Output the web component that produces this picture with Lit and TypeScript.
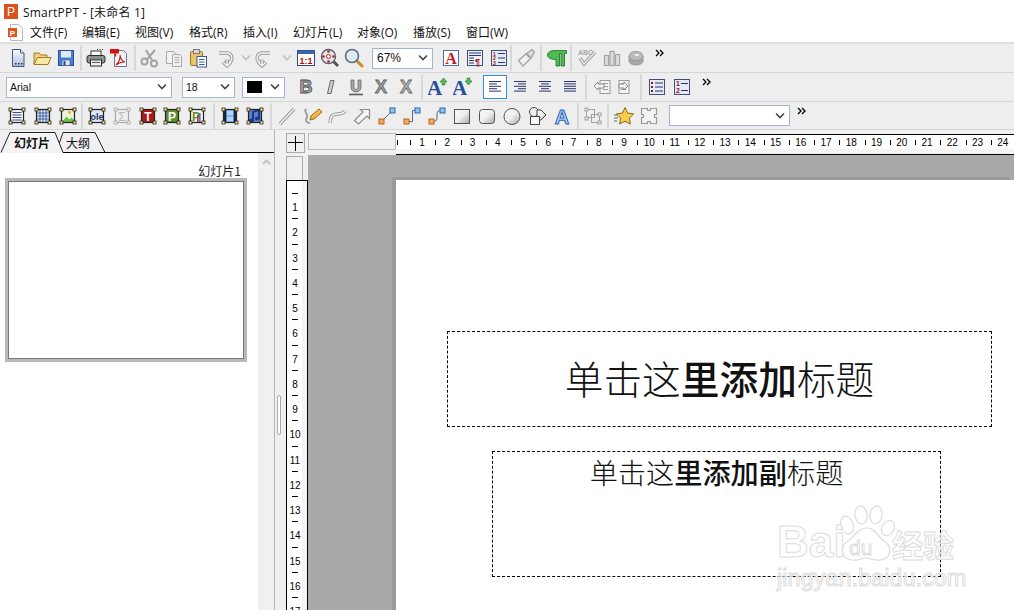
import { LitElement, html, css, svg } from "lit";
import { customElement } from "lit/decorators.js";

const frame = (inner: any, c = "#222", hf = "#ffe680") => svg`${inner}
  <rect x="3.5" y="3.5" width="13" height="13" fill="none" stroke="${c}" stroke-width="1.2"/>
  ${[[2, 2], [15, 2], [2, 15], [15, 15]].map(([x, y]) => svg`<rect x="${x}" y="${y}" width="3" height="3" fill="${hf}" stroke="${c}" stroke-width=".8"/>`)}`;
const lines = (ys: number[], x0: number, x1: number, c: string, w = 1) =>
  ys.map((y) => svg`<line x1="${x0}" y1="${y}" x2="${x1}" y2="${y}" stroke="${c}" stroke-width="${w}"/>`);
const alignIcon = (rows: [number, number][]) =>
  rows.map(([a, b], i) => svg`<line x1="${a}" x2="${b}" y1="${4.5 + i * 2.4}" y2="${4.5 + i * 2.4}" stroke="#27346e" stroke-width="1"/>`);
const hollow = (d: string, w = 3.4) => svg`<path d="${d}" fill="none" stroke="#9a9a9a" stroke-width="${w}" stroke-linejoin="round"/><path d="${d}" fill="none" stroke="#f4f4f4" stroke-width="${w - 2}" stroke-linejoin="round"/>`;
const letter = (t: string, fill: string, stroke: string, extra: any = "") => svg`<text x="10" y="16" text-anchor="middle" font-family="Liberation Sans, sans-serif" font-weight="700" font-size="18" fill="${fill}" stroke="${stroke}" stroke-width=".8">${t}</text>${extra}`;
const conn = (d: string) => svg`<path d="${d}" fill="none" stroke="#4a6a90" stroke-width="1"/><rect x="2" y="13" width="5" height="5" fill="#f5a860" stroke="#b5651d"/><rect x="13" y="2" width="5" height="5" fill="#8cc4f0" stroke="#2c6aa8"/>`;
const aSize = (up: boolean) => svg`<text x="-1" y="18" font-family="Liberation Serif, serif" font-weight="700" font-size="21" fill="#2a4c9c">A</text>
  <path d="${up ? "M15.5 1l3.5 4h-2v3h-3V5h-2z" : "M14 1h3v3h2l-3.5 4L12 4h2z"}" fill="#5cb85c" stroke="#2d7a2d" stroke-width=".6"/>`;
const boxList = (num: boolean) => svg`<rect x="2.5" y="2.5" width="15" height="15" fill="#e4ebf7" stroke="#444e70"/>
  ${num ? svg`<text x="4" y="9" font-size="7" font-weight="700" font-family="Liberation Sans, sans-serif" fill="#a01010">1</text><text x="4" y="16" font-size="7" font-weight="700" font-family="Liberation Sans, sans-serif" fill="#a01010">2</text>${lines([6.5, 13.5], 9, 16, "#27346e")}`
    : svg`<rect x="4" y="5" width="2" height="2" fill="#a01010"/><rect x="4" y="9" width="2" height="2" fill="#a01010"/><rect x="4" y="13" width="2" height="2" fill="#a01010"/>${lines([6, 10, 14], 8, 16, "#27346e")}`}`;
const indent = (flip: boolean) => svg`<g transform="${flip ? "translate(20,0) scale(-1,1)" : ""}"><rect x="8" y="3.5" width="10" height="13" fill="#f4f4f4" stroke="#9a9a9a"/>${lines([6.5, 9.5, 12.5], 11, 16, "#9a9a9a")}</g>
  <path d="${flip ? "M6 3l4 4-4 4V9H1V5h5z" : "M6 3L2 7l4 4V9h6V5H6z"}" transform="translate(${flip ? 1 : 0},2)" fill="#f4f4f4" stroke="#8a8a8a"/>`;

const icons: Record<string, any> = {
  new: svg`<path d="M4.5 1.5h8l3.5 3.5v13.5H4.5z" fill="url(#gPage)" stroke="#46557a"/><path d="M12.5 1.5V5H16" fill="#fff" stroke="#46557a"/><rect x="7" y="15" width="1.5" height="1.5" fill="#333"/><rect x="10" y="15" width="1.5" height="1.5" fill="#333"/><rect x="13" y="15" width="1.5" height="1.5" fill="#333"/>`,
  open: svg`<path d="M2 16V5h5l2 2h6v3" fill="#f0cf80" stroke="#a47c20"/><path d="M2 16.5L5.5 9.5H19l-3 7z" fill="#fbe6a6" stroke="#a47c20"/>`,
  save: svg`<rect x="2.5" y="2.5" width="15" height="15" fill="#4a80d4" stroke="#2b4c9b"/><rect x="5" y="3" width="10" height="6.5" fill="#dfe9f8"/><rect x="6" y="12" width="8" height="5.5" fill="#e6e6e6" stroke="#2b4c9b" stroke-width=".6"/><rect x="7.5" y="13" width="2" height="4" fill="#2b4c9b"/>`,
  print: svg`<rect x="5" y="3" width="10" height="5" fill="#fff" stroke="#333"/><rect x="1" y="7.5" width="18" height="7.5" rx="2" fill="#8c9194" stroke="#2d2d2d"/><rect x="4.5" y="12" width="11" height="6" fill="#f3f3f3" stroke="#2d2d2d"/><line x1="6" x2="14" y1="14.5" y2="14.5" stroke="#555"/><rect x="16" y="9.5" width="1.5" height="1.5" fill="#4ecb4e"/><path d="M11 1h1v1h-1zM13.5 1h1v1h-1zM16 1h1v1h-1z" fill="#555"/>`,
  pdf: svg`<path d="M5.5 2.5h9l3 3v13h-12z" fill="#f4f6fa" stroke="#66769a"/><rect x="1" y="1" width="9" height="4.5" fill="#d81010"/><rect x="6" y="5.5" width="1.2" height="3" fill="#d81010"/><path d="M7 17C10 14 11.5 10 11 7c.5 4 2 6 5 7-3-.3-6 .6-9 3z" fill="none" stroke="#d81010" stroke-width="1.1"/>`,
  cut: svg`<g fill="none" stroke="#a4a4a4" stroke-width="2"><circle cx="4.5" cy="13.5" r="3"/><circle cx="14" cy="15.5" r="3"/><path d="M7 11.5L15 2M12.5 13L6 2"/></g>`,
  copy: svg`<g fill="#f2f2f2" stroke="#a8a8a8"><path d="M2.5 3.5h7l2 2v10h-9z"/><path d="M8.5 6.5h7l2 2v10h-9z"/></g>${lines([9.5, 12, 14.5], 10.5, 15.5, "#a8a8a8")}`,
  paste: svg`<rect x="2.5" y="3.5" width="12" height="14" rx="1" fill="#edc368" stroke="#9c7620"/><rect x="5.5" y="1.5" width="6" height="4" fill="#d8d8d8" stroke="#777"/><rect x="9" y="8.5" width="9.5" height="10.5" fill="#fff" stroke="#3a5a9a"/>${lines([11.5, 14, 16.5], 11, 16.5, "#3a5a9a")}`,
  undo: hollow("M3 5h8a5 5 0 0 1 2 9.5M11 11.5V18M7 14l4 4 4-4"),
  redo: hollow("M17 5H9a5 5 0 0 0-2 9.5M9 11.5V18M5 14l4 4 4-4"),
  one: svg`<rect x="1.5" y="2.5" width="17" height="15" fill="#fff" stroke="#2f4a7a"/><rect x="1.5" y="2.5" width="17" height="3.5" fill="#3c66a8"/><text x="10" y="15.5" text-anchor="middle" font-family="Liberation Sans, sans-serif" font-size="9" font-weight="700" fill="#b00c0c">1:1</text>`,
  zfit: svg`<line x1="13" y1="13" x2="18" y2="18" stroke="#555" stroke-width="3"/><circle cx="8.5" cy="8.5" r="7" fill="#e4e4e8" stroke="#5a6475" stroke-width="1.4"/><circle cx="8.5" cy="8.5" r="2" fill="#fff" stroke="#b03030"/>${[[8.5, 3.5], [8.5, 13.5], [3.5, 8.5], [13.5, 8.5]].map(([x, y]) => svg`<circle cx="${x}" cy="${y}" r="1.3" fill="#c02020"/>`)}`,
  find: svg`<line x1="12.5" y1="12.5" x2="18" y2="18" stroke="#c8901e" stroke-width="3" stroke-linecap="round"/><circle cx="8" cy="8" r="6.5" fill="#dcebf8" stroke="#5a6a7a" stroke-width="1.5"/>`,
  abox: svg`<rect x="2.5" y="2.5" width="15" height="15" fill="#fff" stroke="#5570a0"/><text x="10" y="16" text-anchor="middle" font-family="Liberation Serif, serif" font-size="16" font-weight="700" fill="#c01818">A</text>`,
  para: svg`<rect x="2.5" y="2.5" width="15" height="15" fill="#eef2fa" stroke="#3f4f77"/>${lines([5, 7.5], 4, 16, "#27346e")}${lines([10, 12.5, 15], 4, 9, "#27346e")}<text x="10" y="16.5" font-family="Liberation Sans, sans-serif" font-size="9" font-weight="700" fill="#b01010">¶</text>`,
  list: svg`<rect x="2.5" y="2.5" width="15" height="15" fill="#e4ebf7" stroke="#3f4f77"/><g font-family="Liberation Sans, sans-serif" font-size="5" font-weight="700" fill="#a01010"><text x="4" y="7.5">1</text><text x="4" y="12">2</text><text x="4" y="16.5">3</text></g>${lines([5.5, 10, 14.5], 9, 16, "#27346e")}`,
  brush: svg`<path d="M2.5 12.5L10 6l4.5 4.5L7 18z" fill="#f2f2f2" stroke="#a4a4a4" stroke-width="1.3"/><path d="M10.5 5.5L16 1.5l2.5 2.5-3.5 6z" fill="#dcdcdc" stroke="#a4a4a4" stroke-width="1.3"/>`,
  pil: svg`<path d="M7 2.5H19.5V5.5H17.5V18H14V5.5H12.5V18H9V11.5C3.5 11.5.5 9.5.5 7 .5 4.5 3.5 2.5 7 2.5z" fill="#4fb952" stroke="#1b6e22" stroke-width=".8"/>`,
  check: svg`<g font-family="Liberation Sans, sans-serif" font-size="7" font-weight="700" fill="#a8a8a8"><text x="1" y="7">ABC</text></g><path d="M3 10l4 6L18 4" fill="none" stroke="#a4a4a4" stroke-width="3.4"/><path d="M3 10l4 6L18 4" fill="none" stroke="#f0f0f0" stroke-width="1.2"/>`,
  bars: svg`<g fill="#dedede" stroke="#a4a4a4" stroke-width="1.2"><rect x="2.5" y="7.5" width="4" height="10"/><rect x="8" y="3.5" width="4" height="14"/><rect x="13.5" y="6.5" width="4" height="11"/></g>`,
  disc: svg`<path d="M3 8v5c0 2 3 4 7 4s7-2 7-4V8" fill="#a8a8a8" stroke="#9a9a9a"/><ellipse cx="10" cy="8" rx="7" ry="4.5" fill="#bcbcbc" stroke="#9a9a9a"/><ellipse cx="11" cy="7" rx="2.5" ry="1" fill="#efefef"/>`,
  B: letter("B", "#a6a6a6", "#4c4c4c"),
  I: svg`<path d="M9.5 3.5h3.5L10 16.5H6.5z" fill="#cfcfcf" stroke="#6a6a6a"/>`,
  U: svg`<path d="M5 3v7.5a5 4.5 0 0 0 10 0V3h-3v7.5a2 2 0 0 1-4 0V3z" fill="#a8a8a8" stroke="#5a5a5a" stroke-width=".7"/><line x1="3" y1="17.5" x2="17" y2="17.5" stroke="#5a5a5a" stroke-width="1.6"/>`,
  X1: letter("X", "#9c9c9c", "#666"),
  X2: letter("X", "#b4b4b4", "#6a6a6a"),
  aup: aSize(true),
  adn: aSize(false),
  al: alignIcon([[4, 16], [4, 12], [4, 16], [4, 12], [4, 16]]),
  ar: alignIcon([[4, 16], [8, 16], [4, 16], [8, 16], [4, 16]]),
  ac: alignIcon([[4, 16], [6, 14], [4, 16], [6, 14], [4, 16]]),
  aj: alignIcon([[4, 16], [4, 16], [4, 16], [4, 16], [4, 16]]),
  in1: indent(false),
  in2: indent(true),
  bul: boxList(false),
  num: boxList(true),
  ft: frame(svg`<rect x="3.5" y="3.5" width="13" height="13" fill="#f5f8fe"/>${lines([6.5, 9, 11.5, 14], 5.5, 14.5, "#3c4d82")}`),
  fg: frame(svg`<rect x="3.5" y="3.5" width="13" height="13" fill="#e4ebf7"/>${lines([7, 10, 13], 3.5, 16.5, "#3c5d9a")}<path d="M7 3.5v13M10 3.5v13M13 3.5v13" stroke="#3c5d9a" fill="none"/>`),
  fp: frame(svg`<rect x="3.5" y="3.5" width="13" height="13" fill="#e7f3dc"/><path d="M3.5 16.5l5-6 3 3 2-2 3 3v2z" fill="#6fbf4a"/><circle cx="11.5" cy="6.5" r="1.7" fill="#f0b840"/>`),
  fo: frame(svg`<rect x="3.5" y="3.5" width="13" height="13" fill="#dfe8f8"/><text x="10" y="13.5" text-anchor="middle" font-family="Liberation Sans, sans-serif" font-size="9" font-weight="700" fill="#1e2f6a">ole</text>`),
  fs: frame(svg`<text x="10" y="14.5" text-anchor="middle" font-family="Liberation Sans, sans-serif" font-size="12" fill="#b8b8b8">Σ</text>`, "#a8a8a8", "#ececec"),
  fT: frame(svg`<rect x="3.5" y="3.5" width="13" height="13" fill="#b01818"/><text x="10" y="14.5" text-anchor="middle" font-family="Liberation Sans, sans-serif" font-size="12" font-weight="700" fill="#fff">T</text>`),
  fP: frame(svg`<rect x="3.5" y="3.5" width="13" height="13" fill="#5e9030"/><text x="10" y="14.5" text-anchor="middle" font-family="Liberation Sans, sans-serif" font-size="12" font-weight="700" fill="#fff">P</text>`),
  fQ: frame(svg`<rect x="3.5" y="3.5" width="13" height="13" fill="#f4f8ee"/><text x="9" y="14.5" text-anchor="middle" font-family="Liberation Sans, sans-serif" font-size="12" font-weight="700" fill="#5e9030">P</text><rect x="10" y="9" width="1.6" height="7" fill="#d03030"/><rect x="12" y="7" width="1.6" height="9" fill="#4a70d0"/>`),
  ff: frame(svg`<rect x="3.5" y="3" width="13" height="14" fill="#4f86d8"/><rect x="3" y="3" width="3" height="14" fill="#15233f"/><rect x="14" y="3" width="3" height="14" fill="#15233f"/><rect x="7" y="4.5" width="6" height="5" fill="#b8d4f4"/><rect x="7" y="10.5" width="6" height="5" fill="#b8d4f4"/>`),
  fm: frame(svg`<rect x="3.5" y="3.5" width="13" height="13" fill="#5a86d0"/><path d="M8 14V6l6-2v8" fill="none" stroke="#1f3a80" stroke-width="2"/><ellipse cx="6.5" cy="14.5" rx="2.6" ry="2" fill="#1f3a80"/><ellipse cx="12.5" cy="12.5" rx="2.6" ry="2" fill="#1f3a80"/>`),
  line: hollow("M3 18L17 3"),
  pen: svg`<path d="M4 3c-3 3 3 5 1 8s-1 6 3 6" fill="none" stroke="#999" stroke-width="1.8"/><path d="M8 14l1-4 8-7 3 3-8 7z" fill="#f4b942" stroke="#8f6a18"/>`,
  curve: hollow("M3 17c0-9 5-9 7-9s6 0 8-3"),
  arrow: svg`<path d="M2.5 15.5L11 7 8.5 4.5H17.5V13.5L15 11 6.5 19z" transform="translate(0,-1)" fill="#f4f4f4" stroke="#8c8c8c" stroke-width="1.2"/>`,
  c1: conn("M5 15L15 5"),
  c2: conn("M7 15.5h3.5V4.5H13"),
  c3: conn("M7 15.5c6 0 0-11 6-11"),
  rect: svg`<rect x="2.5" y="3.5" width="15" height="14" fill="url(#gShape)" stroke="#555"/>`,
  rrect: svg`<rect x="2.5" y="3.5" width="15" height="14" rx="3" fill="url(#gShape)" stroke="#555"/>`,
  oval: svg`<circle cx="10" cy="10.5" r="8" fill="url(#gShape)" stroke="#555"/>`,
  shapes: svg`<circle cx="7" cy="6" r="4.5" fill="#f0f0f0" stroke="#444"/><path d="M10 4h4l5 5-5 5h-4z" fill="url(#gShape)" stroke="#444"/><rect x="3.5" y="10.5" width="9" height="8" fill="#f8f8f8" stroke="#444"/>`,
  wa: svg`<text x="10" y="17.5" text-anchor="middle" font-family="Liberation Sans, sans-serif" font-weight="700" font-size="20" fill="#b8d6f6" stroke="#2f66b8" stroke-width="1">A</text>`,
  grp: svg`<g fill="#ececec" stroke="#a0a0a0"><rect x="3.5" y="3.5" width="8" height="8" fill="none"/><rect x="8.5" y="8.5" width="8" height="8" fill="none"/><rect x="2" y="2" width="3" height="3"/><rect x="15" y="15" width="3" height="3"/><rect x="15" y="7" width="3" height="3"/><rect x="2" y="11" width="3" height="3"/></g>`,
  star: svg`<path d="M11 1.5l2.7 5.6 6 .8-4.4 4.2 1.1 6L11 15.2 5.6 18l1-6L2.4 8l6-.9z" fill="#f8cd4c" stroke="#8a6a1a"/><path d="M0 9h3M0 12h4M0 15h3" stroke="#666" fill="none"/>`,
  gfr: svg`<path d="M2.5 2.5h6v2h3v-2h6v6h-2v3h2v6h-6v-2h-3v2h-6v-6h2v-3h-2z" fill="#f4f4f4" stroke="#9a9a9a" stroke-width="1.2"/>`,
};

type Item = { k: "i"; n: string; c: number } | { k: "s"; c: number } | { k: "v"; c: number } | { k: "m"; c: number } | { k: "c"; a: number; b: number; t: string } | { k: "sel"; n: string; c: number };
const i = (n: string, c: number): Item => ({ k: "i", n, c });
const s = (c: number): Item => ({ k: "s", c });
const v = (c: number): Item => ({ k: "v", c });
const m = (c: number): Item => ({ k: "m", c });
const cb = (a: number, b: number, t: string): Item => ({ k: "c", a, b, t });

const rows: Item[][] = [
  [i("new", 18), i("open", 42), i("save", 66), s(81), i("print", 96), i("pdf", 119), s(134.5), i("cut", 150), i("copy", 174), i("paste", 198), i("undo", 226), v(246), i("redo", 263), v(287), i("one", 306), i("zfit", 330), i("find", 354), cb(372, 433, "67%"), i("abox", 451), i("para", 475), i("list", 499), s(511), i("brush", 526), s(541), i("pil", 557), s(571), i("check", 587), i("bars", 612), i("disc", 636), m(660)],
  [cb(6, 172, "Arial"), cb(182, 235, "18"), cb(242, 285, "■"), i("B", 306), i("I", 331), i("U", 356), i("X1", 381), i("X2", 406), s(422), i("aup", 438), i("adn", 463), { k: "sel", n: "al", c: 495 }, i("ar", 520), i("ac", 545), i("aj", 570), s(586), i("in1", 602), i("in2", 627), s(641), i("bul", 657), i("num", 682), m(707)],
  [i("ft", 17), i("fg", 43), i("fp", 68), s(82), i("fo", 97), i("fs", 122), i("fT", 148), i("fP", 172), i("fQ", 197), s(214), i("ff", 230), i("fm", 255), s(271), i("line", 287), i("pen", 312), i("curve", 337), i("arrow", 362), i("c1", 387), i("c2", 412), i("c3", 437), i("rect", 462), i("rrect", 487), i("oval", 512), i("shapes", 537), i("wa", 562), s(578), i("grp", 593), s(608), i("star", 624), i("gfr", 649), cb(669, 790, ""), m(802)],
];

const menus: [string, number][] = [["文件(F)", 38], ["编辑(E)", 39], ["视图(V)", 40], ["格式(R)", 40], ["插入(I)", 36], ["幻灯片(L)", 50], ["对象(O)", 42], ["播放(S)", 39], ["窗口(W)", 44]];
const menuX = [30, 82, 135, 189, 243, 293, 357, 413, 466];

const widthOf = (it: Item) => (it.k === "c" ? it.b - it.a : it.k === "s" ? 2 : it.k === "v" ? 10 : it.k === "m" ? 10 : it.k === "sel" ? 24 : 20);
const leftOf = (it: Item) => (it.k === "c" ? it.a : it.c - widthOf(it) / 2);

@customElement("app-root")
export class AppRoot extends LitElement {
  static styles = css`
    :host { display: block; width: 1014px; height: 610px; overflow: hidden; position: relative; background: #f0f0f0; font-family: "Open Sans", "Noto Sans CJK SC", sans-serif; color: #111; }
    svg { display: block; flex: none; }
    .defs { width: 0; height: 0; position: absolute; }
    .title { height: 22px; background: #fff; display: flex; align-items: center; gap: 5px; padding: 1px 0 0 4px; box-sizing: border-box; font-size: 12px; }
    .title span { letter-spacing: .2px; }
    .menu { height: 20px; background: #fff; display: flex; align-items: center; padding-left: 8px; font-size: 12px; box-sizing: border-box; }
    .menu span { white-space: nowrap; display: block; }
    .bar { box-sizing: border-box; display: flex; align-items: center; background: #eee; border-bottom: 1px solid #d6d6d6; height: 29px; }
    .bar.r0 { height: 31px; border-top: 2px solid #dedede; }
    .bar.r2 { height: 28px; }
    .sep { width: 2px; height: 26px; background: #d8d8d8; flex: none; }
    .sel { width: 24px; height: 24px; box-sizing: border-box; border: 1px solid #3d8ad6; background: #fff; display: flex; align-items: center; justify-content: center; flex: none; }
    .more { flex: none; width: 10px; transform: translateY(-5px); }
    .combo { flex: 1; box-sizing: border-box; height: 21px; background: #fff; border: 1px solid #a4b5cf; display: flex; align-items: center; justify-content: space-between; padding: 0 4px 0 3px; font-size: 10.5px; font-family: "Liberation Sans", sans-serif; }
    .combo.big { font-size: 12px; padding-left: 4px; }
    .swatch { width: 15px; height: 12px; background: #000; margin-left: 1px; }
    .main { display: flex; height: 480px; box-sizing: border-box; }
    .left { width: 275px; flex: none; box-sizing: border-box; border-right: 1px solid #b4b4b4; display: flex; flex-direction: column; }
    .tabs { height: 23px; flex: none; background: #f0f0f0; }
    .tabs svg { width: 274px; height: 23px; }
    .tabs text { font-family: "Noto Sans CJK SC", sans-serif; font-size: 12px; fill: #111; }
    .tabs text.on { font-weight: 700; }
    .slides { flex: 1; display: flex; min-height: 0; }
    .list { width: 258px; background: #fff; box-sizing: border-box; padding: 10px 0 0 5px; }
    .cap { font-size: 12px; line-height: 15px; height: 15px; text-align: right; width: 236px; font-family: "Noto Sans CJK SC", sans-serif; color: #222; }
    .thumb { width: 242px; height: 184px; box-sizing: border-box; border: 3px solid #b9b9b9; background: #fff; }
    .thumb div { height: 100%; box-sizing: border-box; border: 1px solid #777; }
    .sb { flex: 1; background: #f0f0f0; display: flex; justify-content: center; padding-top: 6px; }
    .split { width: 11px; flex: none; display: flex; align-items: center; padding-top: 90px; box-sizing: border-box; padding-left: 2px; }
    .grip { width: 2px; height: 38px; border: 1px solid #aaa; border-radius: 3px; background: #fff; }
    .work { flex: 1; display: grid; grid-template-columns: 22px 1fr; grid-template-rows: 25px 1fr; min-width: 0; }
    .corner { margin-top: 3px; width: 19px; height: 20px; box-sizing: border-box; border: 1px solid #aaa; display: flex; align-items: center; justify-content: center; }
    .hr { display: flex; align-items: flex-start; overflow: hidden; }
    .hbox { width: 88px; height: 17px; box-sizing: border-box; border: 1px solid #bbb; flex: none; margin-top: 3px; }
    .hruler { flex: 1; height: 21px; margin-top: 4px; box-sizing: border-box; border-top: 1px solid #000; border-bottom: 1px solid #000; display: flex; background: linear-gradient(#fff 14px, #f4f4f4 14px); overflow: hidden; }
    .hlead { width: 14px; flex: none; }
    .hlead i { display: block; width: 1px; height: 5px; background: #000; margin: 5px 0 0 1px; }
    .hcell { width: 25.26px; flex: none; display: flex; align-items: flex-start; font: 10px "Liberation Sans", sans-serif; line-height: 13px; padding: 1px 2px 0 0; box-sizing: border-box; color: #000; }
    .hcell i { width: 1px; height: 5px; background: #000; margin-top: 4px; flex: none; }
    .hcell b { font-weight: 400; flex: 1; text-align: center; }
    .vcol { display: flex; flex-direction: column; width: 22px; overflow: hidden; margin-top: 1px; }
    .vbox { width: 17px; height: 24px; flex: none; box-sizing: border-box; border: 1px solid #aaa; border-bottom: none; background: #f0f0f0; }
    .vruler { flex: 1; box-sizing: border-box; border-left: 1px solid #000; border-right: 1px solid #000; border-top: 1px solid #000; width: 22px; background: linear-gradient(90deg, #fff 15px, #f4f4f4 15px); padding-top: 12px; }
    .vcell { height: 25.27px; display: flex; flex-direction: column; align-items: center; font: 10px "Liberation Sans", sans-serif; width: 16px; color: #000; }
    .vcell i { width: 6px; height: 1px; background: #000; flex: none; }
    .vcell b { font-weight: 400; line-height: 13px; margin-top: 7px; }
    .canvas { background: #a9a9a9; overflow: hidden; min-height: 0; padding: 25px 0 0 88px; box-sizing: border-box; }
    .page { background: #fff; height: 500px; box-shadow: -4px -3px 0 #999; display: flex; flex-direction: column; padding-top: 151px; box-sizing: border-box; font-family: "Noto Sans CJK SC", sans-serif; font-weight: 300; }
    .ph { border: 1px dashed #000; box-sizing: border-box; text-align: center; color: #111; white-space: nowrap; }
    .ph b { font-weight: 500; }
    .t1 { margin-left: 51px; width: 545px; height: 96px; font-size: 38.7px; line-height: 90px; }
    .t2 { margin-left: 96px; margin-top: 24px; width: 449px; height: 126px; font-size: 28.2px; line-height: 40px; }
    .wm { position: absolute; left: 770px; top: 495px; width: 200px; height: 100px; pointer-events: none; }
    .wm text { fill: rgba(255,255,255,.55); stroke: #dcdcdc; stroke-width: 1; font-family: "Liberation Sans", sans-serif; font-weight: 700; }
    .wm .cn { font-family: "Noto Sans CJK SC", sans-serif; }
  `;

  private ic(n: string) {
    return html`<svg width="20" height="20" viewBox="0 0 20 20">${icons[n]}</svg>`;
  }

  private item(it: Item) {
    if (it.k === "i") return this.ic(it.n);
    if (it.k === "sel") return html`<div class="sel">${this.ic(it.n)}</div>`;
    if (it.k === "s") return html`<div class="sep"></div>`;
    if (it.k === "v") return html`<svg width="10" height="8" viewBox="0 0 10 8"><path d="M1 1.5l4 4 4-4" fill="none" stroke="#c0c0c0" stroke-width="1.6"/></svg>`;
    if (it.k === "m") return html`<svg class="more" width="10" height="8" viewBox="0 0 10 8"><path d="M1 1l3 3-3 3M5 1l3 3-3 3" fill="none" stroke="#000" stroke-width="1.3"/></svg>`;
    const chev = html`<svg width="10" height="8" viewBox="0 0 10 8"><path d="M1 1.5l4 4 4-4" fill="none" stroke="#444" stroke-width="1.6"/></svg>`;
    return html`<div class="combo ${it.t === "67%" ? "big" : ""}">${it.t === "■" ? html`<div class="swatch"></div>` : html`<span>${it.t}</span>`}${chev}</div>`;
  }

  private bar(items: Item[], idx: number) {
    let x = 0;
    return html`<div class="bar r${idx}">${items.map((it) => {
      const ml = leftOf(it) - x;
      const w = widthOf(it);
      x = leftOf(it) + w;
      return html`<div style="margin-left:${ml}px;width:${w}px;flex:none;display:flex;align-items:center">${this.item(it)}</div>`;
    })}</div>`;
  }

  render() {
    let mx = 8 + 15;
    const hn = Array.from({ length: 24 }, (_, k) => k + 1);
    const vn = Array.from({ length: 17 }, (_, k) => k + 1);
    return html`
      <svg class="defs"><defs>
        <linearGradient id="gPage" x1="0" y1="0" x2="0" y2="1"><stop offset="0" stop-color="#fff"/><stop offset="1" stop-color="#a9bde4"/></linearGradient>
        <linearGradient id="gShape" x1="0" y1="0" x2="1" y2="1"><stop offset="0" stop-color="#fafafa"/><stop offset=".5" stop-color="#eee"/><stop offset="1" stop-color="#a8a8a8"/></linearGradient>
      </defs></svg>
      <div class="title">
        <svg width="14" height="15" viewBox="0 0 14 15"><rect width="14" height="15" fill="#d9541e"/><text x="7" y="12" text-anchor="middle" font-family="Liberation Sans, sans-serif" font-size="12" fill="#fff">P</text></svg>
        <span>SmartPPT - [未命名 1]</span>
      </div>
      <div class="menu">
        <svg width="15" height="17" viewBox="0 0 15 17"><path d="M2.5.5h8l4 4v12h-12z" fill="#fff" stroke="#b8b8b8"/><rect y="4" width="9" height="9" fill="#e0561f"/><text x="4.5" y="11.5" text-anchor="middle" font-family="Liberation Sans, sans-serif" font-size="8" font-weight="700" fill="#fff">P</text></svg>
        ${menus.map(([t, w], k) => {
          const ml = menuX[k] - mx;
          mx = menuX[k] + w;
          return html`<span style="margin-left:${ml}px;width:${w}px">${t}</span>`;
        })}
      </div>
      ${rows.map((r, k) => this.bar(r, k))}
      <div class="main">
        <div class="left">
          <div class="tabs">
            <svg viewBox="0 0 274 23">
              <path d="M58 17L63 2.5H95L105 22.5" fill="#f0f0f0" stroke="#222"/>
              <path d="M63 22.5H274" stroke="#000" fill="none"/>
              <path d="M1 22.5L10 2.5H55L63 22.5" fill="#f4f4f4" stroke="#222"/>
              <text class="on" x="14" y="18">幻灯片</text>
              <text x="66" y="18">大纲</text>
            </svg>
          </div>
          <div class="slides">
            <div class="list">
              <div class="cap">幻灯片1</div>
              <div class="thumb"><div></div></div>
            </div>
            <div class="sb"><svg width="9" height="6" viewBox="0 0 9 6"><path d="M1 5l3.5-3.5L8 5" fill="none" stroke="#c4c4c4" stroke-width="2"/></svg></div>
          </div>
        </div>
        <div class="split"><div class="grip"></div></div>
        <div class="work">
          <div class="corner"><svg width="15" height="15" viewBox="0 0 15 15"><path d="M7.5 0v15M0 6.5h15" stroke="#000" fill="none"/></svg></div>
          <div class="hr">
            <div class="hbox"></div>
            <div class="hruler">
              <div class="hlead"><i></i></div>
              ${hn.map((n) => html`<div class="hcell"><i></i><b>${n}</b></div>`)}
            </div>
          </div>
          <div class="vcol">
            <div class="vbox"></div>
            <div class="vruler">
              ${vn.map((n) => html`<div class="vcell"><i></i><b>${n}</b></div>`)}
            </div>
          </div>
          <div class="canvas">
            <div class="page">
              <div class="ph t1">单击这<b>里添加</b>标题</div>
              <div class="ph t2">单击这<b>里添加副</b>标题</div>
            </div>
          </div>
        </div>
      </div>
      <svg class="wm" viewBox="0 0 200 100">
        <text x="7" y="62" font-size="44">Bai</text>
        <g fill="rgba(255,255,255,.55)" stroke="#dcdcdc" stroke-width="1.2">
          <ellipse cx="77" cy="30" rx="6" ry="9" transform="rotate(-18 77 30)"/>
          <ellipse cx="91" cy="20" rx="6" ry="9" transform="rotate(-8 91 20)"/>
          <ellipse cx="106" cy="20" rx="6" ry="9" transform="rotate(8 106 20)"/>
          <ellipse cx="118" cy="33" rx="6" ry="8" transform="rotate(30 118 33)"/>
          <path d="M97 33c8 0 10 8 17 13 9 6 7 18-4 19-7 .5-10-2-14-2s-7 3-14 2c-11-1-13-13-4-19 7-5 10-13 19-13z"/>
        </g>
        <text x="79" y="60" font-size="21" style="font-weight:400">du</text>
        <text class="cn" x="122" y="62" font-size="31">经验</text>
        <text x="7" y="91" font-size="23.5" style="font-weight:400">jingyan.baidu.com</text>
      </svg>
    `;
  }
}
